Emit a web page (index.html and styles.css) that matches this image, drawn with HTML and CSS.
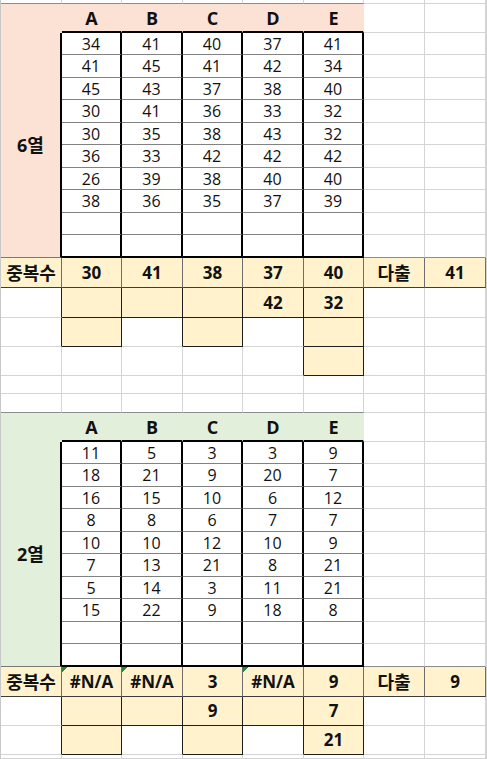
FILE: index.html
```html
<html>

<head>
    <meta charset="UTF-8">
    <meta name="viewport" content="width=device-width,initial-scale=1">
    <link rel="stylesheet" href="styles.css">
</head>

<body>
    <table class="sheet">
        <colgroup>
            <col class="c61"><col class="c60"><col class="c61"><col class="c60"><col class="c61"><col class="c60"><col class="c61"><col class="c61"><col class="c1">
        </colgroup>
        <!-- 6열 block -->
        <tr class="h4"><td class="top"></td><td class="top"></td><td class="top"></td><td class="top"></td><td class="top"></td><td class="top"></td><td></td><td></td><td></td></tr>
        <tr class="h29"><td class="p"></td><td class="p h">A</td><td class="p h">B</td><td class="p h">C</td><td class="p h">D</td><td class="p h">E</td><td></td><td></td><td></td></tr>
        <tr class="h22"><td class="p side" rowspan="10">6열</td><td class="d">34</td><td class="d">41</td><td class="d">40</td><td class="d">37</td><td class="d">41</td><td></td><td></td><td></td></tr>
        <tr class="h23"><td class="d">41</td><td class="d">45</td><td class="d">41</td><td class="d">42</td><td class="d">34</td><td></td><td></td><td></td></tr>
        <tr class="h22"><td class="d">45</td><td class="d">43</td><td class="d">37</td><td class="d">38</td><td class="d">40</td><td></td><td></td><td></td></tr>
        <tr class="h23"><td class="d">30</td><td class="d">41</td><td class="d">36</td><td class="d">33</td><td class="d">32</td><td></td><td></td><td></td></tr>
        <tr class="h22"><td class="d">30</td><td class="d">35</td><td class="d">38</td><td class="d">43</td><td class="d">32</td><td></td><td></td><td></td></tr>
        <tr class="h23"><td class="d">36</td><td class="d">33</td><td class="d">42</td><td class="d">42</td><td class="d">42</td><td></td><td></td><td></td></tr>
        <tr class="h22"><td class="d">26</td><td class="d">39</td><td class="d">38</td><td class="d">40</td><td class="d">40</td><td></td><td></td><td></td></tr>
        <tr class="h23"><td class="d">38</td><td class="d">36</td><td class="d">35</td><td class="d">37</td><td class="d">39</td><td></td><td></td><td></td></tr>
        <tr class="h22"><td class="d"></td><td class="d"></td><td class="d"></td><td class="d"></td><td class="d"></td><td></td><td></td><td></td></tr>
        <tr class="h23"><td class="d last"></td><td class="d last"></td><td class="d last"></td><td class="d last"></td><td class="d last"></td><td class="top"></td><td class="top"></td><td></td></tr>
        <tr class="h30"><td class="s ko">중복수</td><td class="s">30</td><td class="s">41</td><td class="s">38</td><td class="s">37</td><td class="s">40</td><td class="s ko">다출</td><td class="s">41</td><td></td></tr>
        <tr class="h30"><td class="rb"></td><td class="y"></td><td class="y"></td><td class="y"></td><td class="y">42</td><td class="y">32</td><td></td><td></td><td></td></tr>
        <tr class="h29"><td class="rb"></td><td class="y"></td><td class="rb"></td><td class="y"></td><td class="rb"></td><td class="y"></td><td></td><td></td><td></td></tr>
        <tr class="h29"><td></td><td></td><td></td><td></td><td class="rb"></td><td class="y"></td><td></td><td></td><td></td></tr>
        <tr class="h18"><td></td><td></td><td></td><td></td><td></td><td></td><td></td><td></td><td></td></tr>
        <!-- 2열 block -->
        <tr class="h19"><td class="top"></td><td class="top"></td><td class="top"></td><td class="top"></td><td class="top"></td><td class="top"></td><td></td><td></td><td></td></tr>
        <tr class="h29"><td class="g"></td><td class="g h">A</td><td class="g h">B</td><td class="g h">C</td><td class="g h">D</td><td class="g h">E</td><td></td><td></td><td></td></tr>
        <tr class="h22"><td class="g side" rowspan="10">2열</td><td class="d">11</td><td class="d">5</td><td class="d">3</td><td class="d">3</td><td class="d">9</td><td></td><td></td><td></td></tr>
        <tr class="h23"><td class="d">18</td><td class="d">21</td><td class="d">9</td><td class="d">20</td><td class="d">7</td><td></td><td></td><td></td></tr>
        <tr class="h22"><td class="d">16</td><td class="d">15</td><td class="d">10</td><td class="d">6</td><td class="d">12</td><td></td><td></td><td></td></tr>
        <tr class="h23"><td class="d">8</td><td class="d">8</td><td class="d">6</td><td class="d">7</td><td class="d">7</td><td></td><td></td><td></td></tr>
        <tr class="h22"><td class="d">10</td><td class="d">10</td><td class="d">12</td><td class="d">10</td><td class="d">9</td><td></td><td></td><td></td></tr>
        <tr class="h23"><td class="d">7</td><td class="d">13</td><td class="d">21</td><td class="d">8</td><td class="d">21</td><td></td><td></td><td></td></tr>
        <tr class="h22"><td class="d">5</td><td class="d">14</td><td class="d">3</td><td class="d">11</td><td class="d">21</td><td></td><td></td><td></td></tr>
        <tr class="h23"><td class="d">15</td><td class="d">22</td><td class="d">9</td><td class="d">18</td><td class="d">8</td><td></td><td></td><td></td></tr>
        <tr class="h22"><td class="d"></td><td class="d"></td><td class="d"></td><td class="d"></td><td class="d"></td><td></td><td></td><td></td></tr>
        <tr class="h23"><td class="d last"></td><td class="d last"></td><td class="d last"></td><td class="d last"></td><td class="d last"></td><td class="top"></td><td class="top"></td><td></td></tr>
        <tr class="h30"><td class="s ko">중복수</td><td class="s na">#N/A</td><td class="s na">#N/A</td><td class="s">3</td><td class="s na">#N/A</td><td class="s">9</td><td class="s ko">다출</td><td class="s">9</td><td></td></tr>
        <tr class="h29"><td class="rb"></td><td class="y"></td><td class="y"></td><td class="y">9</td><td class="y"></td><td class="y">7</td><td></td><td></td><td></td></tr>
        <tr class="h29"><td class="rb"></td><td class="y"></td><td class="rb"></td><td class="y"></td><td class="rb"></td><td class="y">21</td><td></td><td></td><td></td></tr>
        <tr class="h4"><td></td><td></td><td></td><td></td><td></td><td></td><td></td><td></td><td></td></tr>
    </table>
</body>

</html>
```

FILE: styles.css
```css
body {
    margin: 0;
    overflow: hidden;
    background-color: white;
}

.sheet {
    border-collapse: separate;
    border-spacing: 0;
    table-layout: fixed;
    width: 487px;
    border-left: 1px solid rgb(200, 200, 200);
    font-family: "Open Sans", "Noto Sans CJK KR", sans-serif;
    font-size: 16px;
    color: rgb(17, 17, 17);
}

.c61 { width: 61px; }
.c60 { width: 60px; }
.c1 { width: 1px; }

.h4 { height: 4px; }
.h18 { height: 18px; }
.h19 { height: 19px; }
.h22 { height: 22px; }
.h23 { height: 23px; }
.h29 { height: 29px; }
.h30 { height: 30px; }

.sheet td {
    box-sizing: border-box;
    padding: 0;
    text-align: center;
    vertical-align: middle;
    line-height: 18px;
    white-space: nowrap;
    overflow: hidden;
    border-right: 1px solid rgb(212, 212, 212);
    border-bottom: 1px solid rgb(212, 212, 212);
}

/* darker gridline above a coloured block */
.sheet td.top {
    border-bottom-color: rgb(140, 140, 140);
}

.sheet td.p {
    background-color: rgb(251, 226, 213);
    border-color: rgb(251, 226, 213);
}

.sheet td.g {
    background-color: rgb(226, 239, 218);
    border-color: rgb(226, 239, 218);
}

.sheet td.h {
    font-size: 18px;
    font-weight: bold;
    border-bottom: 2px solid black;
}

.sheet td.side {
    font-size: 18px;
    font-weight: bold;
    border-right: 2px solid black;
    border-bottom: 1px solid rgb(120, 120, 120);
}

.sheet td.d {
    border-right: 2px solid black;
    border-bottom: 1px solid rgb(130, 130, 130);
}

.sheet td.d.last {
    border-bottom: 2px solid black;
}

.sheet td.s {
    background-color: rgb(255, 242, 204);
    font-size: 17px;
    font-weight: bold;
    border-right: 1px solid rgb(110, 110, 110);
    border-bottom: 1px solid rgb(60, 60, 60);
}

.sheet td.s.ko {
    font-size: 18px;
}

.sheet td.y {
    background-color: rgb(255, 242, 204);
    font-size: 17px;
    font-weight: bold;
    border-right: 1px solid rgb(30, 30, 30);
    border-bottom: 1px solid rgb(30, 30, 30);
}

.sheet td.rb {
    border-right: 1px solid rgb(30, 30, 30);
}

/* excel error marker */
.sheet td.na {
    background-image: linear-gradient(135deg, rgb(30, 140, 60) 0 4px, transparent 4px);
    background-size: 7px 7px;
    background-repeat: no-repeat;
}
```
